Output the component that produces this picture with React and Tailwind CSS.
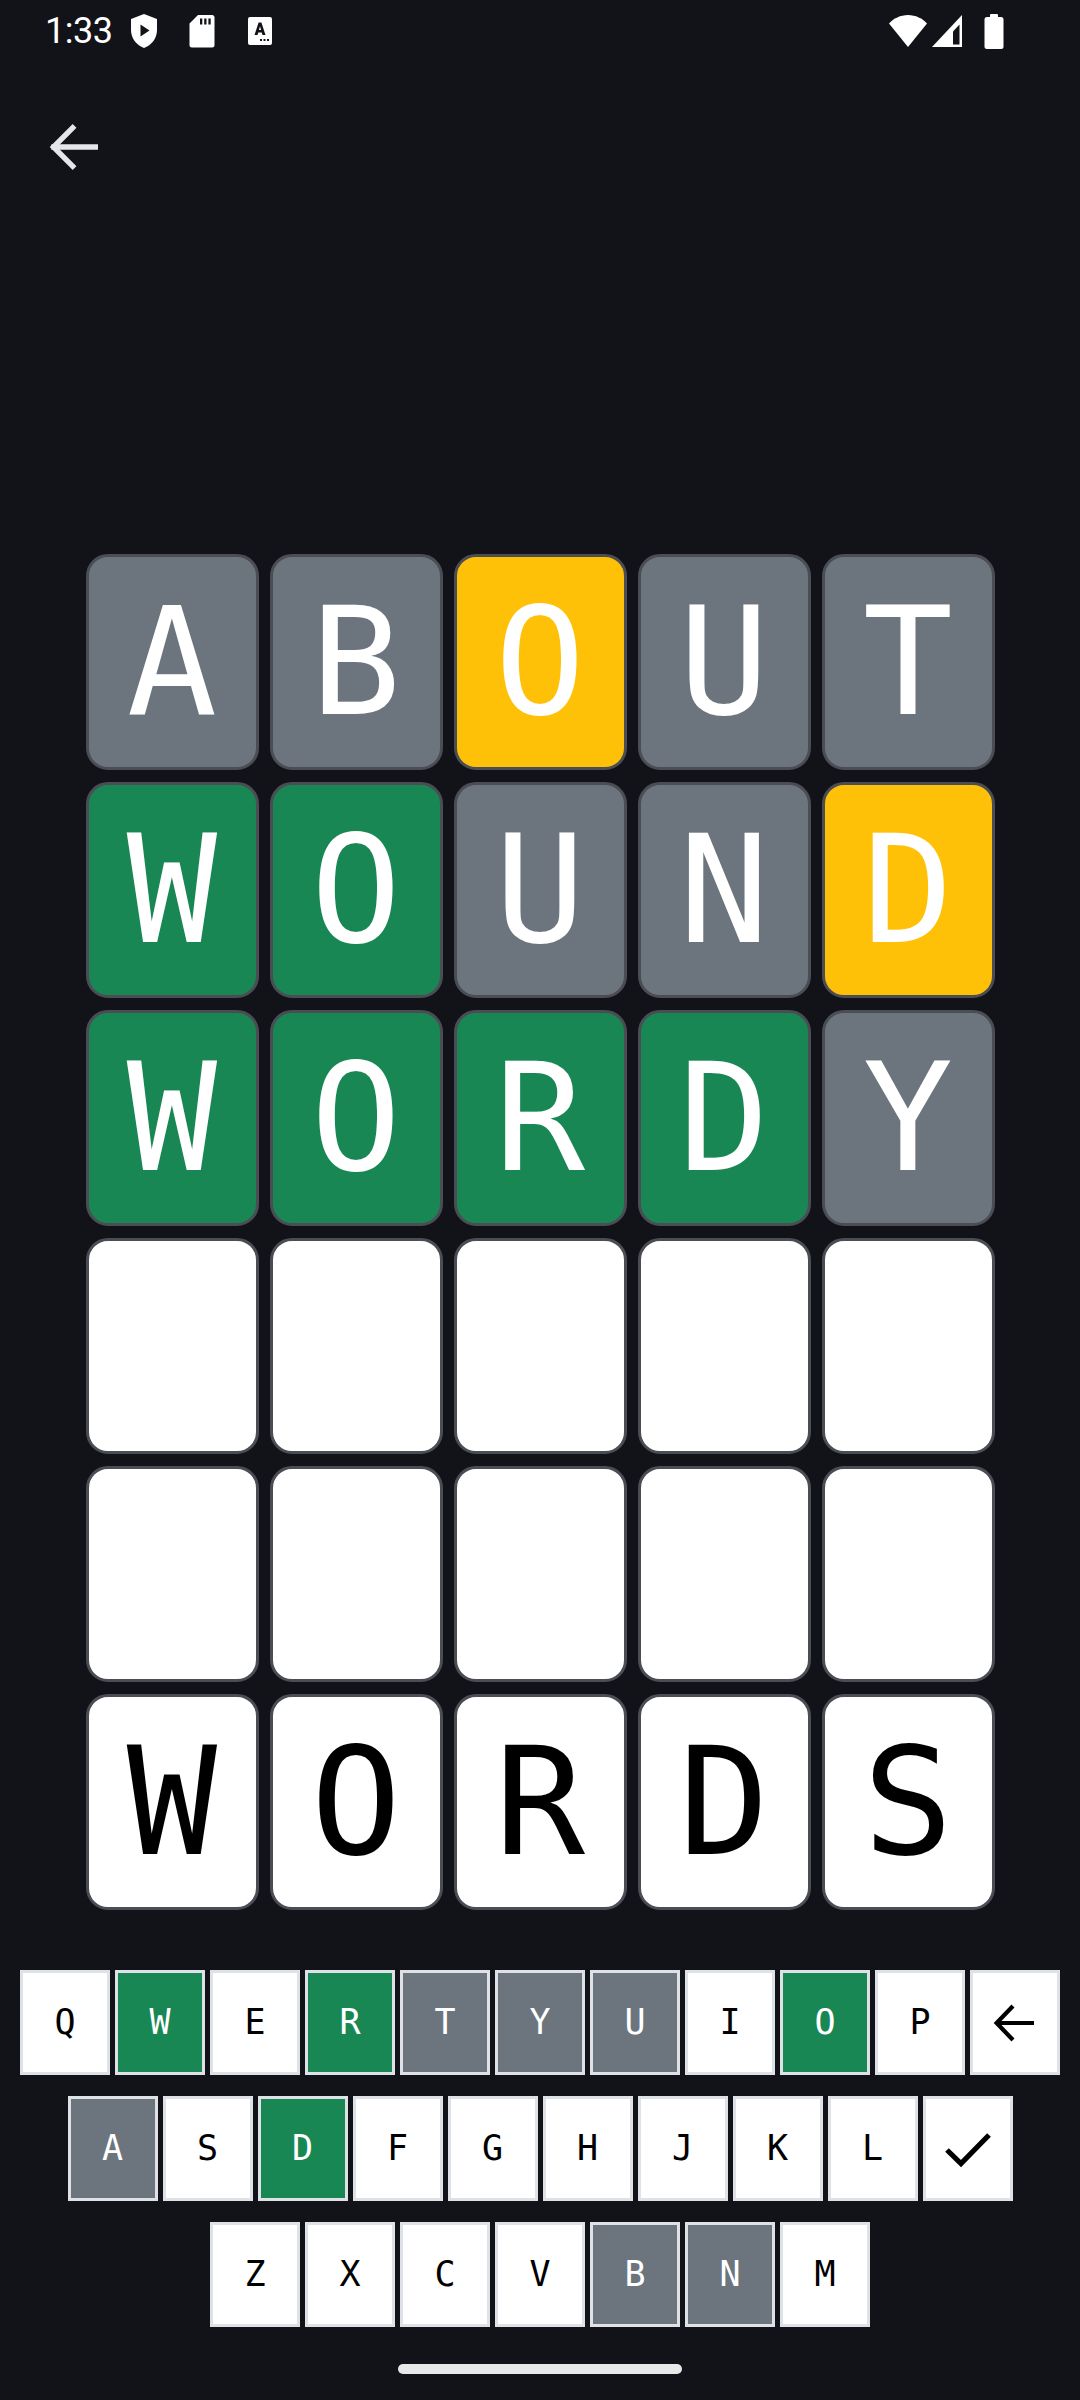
import React from "react";

const TILE = {
  gray: "bg-[#6c757d] text-white",
  green: "bg-[#198754] text-white",
  yellow: "bg-[#ffc107] text-white",
  white: "bg-white text-black",
};

const rows = [
  [["A", "gray"], ["B", "gray"], ["O", "yellow"], ["U", "gray"], ["T", "gray"]],
  [["W", "green"], ["O", "green"], ["U", "gray"], ["N", "gray"], ["D", "yellow"]],
  [["W", "green"], ["O", "green"], ["R", "green"], ["D", "green"], ["Y", "gray"]],
  [["", "white"], ["", "white"], ["", "white"], ["", "white"], ["", "white"]],
  [["", "white"], ["", "white"], ["", "white"], ["", "white"], ["", "white"]],
  [["W", "white"], ["O", "white"], ["R", "white"], ["D", "white"], ["S", "white"]],
];

const KEY = {
  w: "bg-white text-black",
  g: "bg-[#198754] text-white",
  x: "bg-[#6c757d] text-white",
};

const kb = [
  [["Q", "w"], ["W", "g"], ["E", "w"], ["R", "g"], ["T", "x"], ["Y", "x"], ["U", "x"], ["I", "w"], ["O", "g"], ["P", "w"], ["BACK", "w"]],
  [["A", "x"], ["S", "w"], ["D", "g"], ["F", "w"], ["G", "w"], ["H", "w"], ["J", "w"], ["K", "w"], ["L", "w"], ["OK", "w"]],
  [["Z", "w"], ["X", "w"], ["C", "w"], ["V", "w"], ["B", "x"], ["N", "x"], ["M", "w"]],
];

function BackIcon({ color = "currentColor", size = 64, sw = 2 }) {
  return (
    <svg width={size} height={size} viewBox="0 0 24 24" fill="none">
      <path d="M20 12H4.5" stroke={color} strokeWidth={sw} strokeLinecap="square" />
      <path d="M11.5 4.8L4.3 12l7.2 7.2" stroke={color} strokeWidth={sw} strokeLinecap="square" />
    </svg>
  );
}

function Key({ label, state }) {
  return (
    <div
      className={`w-[90px] h-[105px] border-[3px] border-[#dee2e6] flex items-center justify-center ${KEY[state]}`}
      style={{ fontFamily: '"DejaVu Sans Mono", monospace' }}
    >
      {label === "BACK" ? (
        <svg width="48" height="48" viewBox="0 0 24 24" fill="none">
          <path d="M21.5 12H2.8" stroke="black" strokeWidth="2.1" />
          <path d="M11 3.5L2.8 12l8.2 8.5" stroke="black" strokeWidth="2.1" />
        </svg>
      ) : label === "OK" ? (
        <svg width="48" height="48" viewBox="0 0 24 24" fill="none">
          <path d="M1.5 12.5l7 6.8L22.5 5" stroke="black" strokeWidth="2.6" />
        </svg>
      ) : (
        <span className="text-[35px] leading-none">{label}</span>
      )}
    </div>
  );
}

export default function App() {
  return (
    <div className="w-[1080px] min-h-[2400px] bg-[#121318] flex flex-col relative overflow-hidden">
      {/* status bar */}
      <div className="h-[62px] flex items-center justify-between pl-[45px] pr-[76px]">
        <div className="flex items-center">
          <span
            className="text-white text-[36px] leading-none tracking-[-0.5px]"
            style={{ fontFamily: "Roboto, sans-serif" }}
          >
            1:33
          </span>
          {/* shield play */}
          <svg className="ml-[18px]" width="28" height="36" viewBox="0 0 28 36">
            <path d="M14 1L27 6v11c0 8.5-5.6 15.3-13 18C6.6 32.3 1 25.5 1 17V6z" fill="white" />
            <path d="M10.5 11.5v12l9-6z" fill="#121318" />
          </svg>
          {/* sd card */}
          <svg className="ml-[31px]" width="26" height="34" viewBox="0 0 26 34">
            <path d="M9 1h14a2.5 2.5 0 0 1 2.5 2.5v27.5a2.5 2.5 0 0 1-2.5 2.5H3a2.5 2.5 0 0 1-2.5-2.5V9.5z" fill="white" />
            <rect x="11" y="4.5" width="2.3" height="6" fill="#121318" />
            <rect x="15.2" y="4.5" width="2.3" height="6" fill="#121318" />
            <rect x="19.4" y="4.5" width="2.3" height="6" fill="#121318" />
          </svg>
          {/* A icon */}
          <svg className="ml-[33px]" width="24" height="28" viewBox="0 0 24 28">
            <rect x="0" y="0" width="24" height="28" rx="2" fill="white" />
            <path d="M6.5 18L10.6 5.5h2.8L17.5 18h-3l-0.8-2.6h-3.4L9.5 18zM11 13h2.1L12 9.2z" fill="#121318" />
            <rect x="12" y="22" width="2" height="2" fill="#121318" />
            <rect x="15.5" y="22" width="2" height="2" fill="#121318" />
            <rect x="19" y="22" width="2" height="2" fill="#121318" />
          </svg>
        </div>
        <div className="flex items-center">
          {/* wifi */}
          <svg width="40" height="34" viewBox="0 0 40 34">
            <path d="M20 33L1 9.5C5.5 4.5 12.3 1 20 1s14.5 3.5 19 8.5z" fill="white" />
          </svg>
          {/* signal */}
          <svg className="ml-[3px]" width="32" height="34" viewBox="0 0 32 34">
            <path d="M1 33L31 1v32z" fill="white" />
            <path d="M22 17.5L28.5 10.5V30.5H22z" fill="#121318" />
          </svg>
          {/* battery */}
          <svg className="ml-[21px]" width="20" height="35" viewBox="0 0 20 35">
            <rect x="6" y="0" width="8" height="4" rx="1" fill="white" />
            <rect x="0.5" y="3" width="19" height="32" rx="2.5" fill="white" />
          </svg>
        </div>
      </div>

      {/* top bar with back arrow */}
      <div className="pt-[53px] pl-[42px]">
        <BackIcon color="#e6e6ea" />
      </div>

      {/* board */}
      <div className="mt-[375px] flex flex-col items-center gap-y-[12px]">
        {rows.map((row, ri) => (
          <div key={ri} className="flex gap-x-[11px]">
            {row.map(([ch, st], ci) => (
              <div
                key={ci}
                className={`w-[173px] h-[216px] rounded-[22px] border-[3px] border-[#4b4d55] flex items-center justify-center ${TILE[st]}`}
              >
                <span
                  className="text-[150px] leading-none"
                  style={{ fontFamily: '"DejaVu Sans Mono", monospace' }}
                >
                  {ch}
                </span>
              </div>
            ))}
          </div>
        ))}
      </div>

      {/* keyboard */}
      <div className="mt-[60px] flex flex-col items-center gap-y-[21px]">
        {kb.map((row, ri) => (
          <div key={ri} className="flex gap-x-[5px]">
            {row.map(([l, s], ki) => (
              <Key key={ki} label={l} state={s} />
            ))}
          </div>
        ))}
      </div>

      {/* home indicator */}
      <div className="mt-[37px] flex justify-center">
        <div className="w-[284px] h-[10px] rounded-full bg-[#e8e8e8]" />
      </div>
    </div>
  );
}
